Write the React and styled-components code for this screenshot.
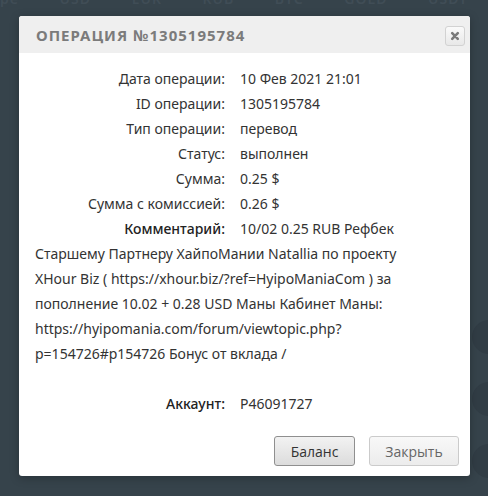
import React from "react";
import styled, { createGlobalStyle } from "styled-components";

const GlobalStyle = createGlobalStyle`
  html, body {
    margin: 0;
    padding: 0;
    height: 100%;
    overflow: hidden;
    background: #36434b;
  }
  body {
    font-family: "Noto Sans", "Open Sans", sans-serif;
  }
`;

const Page = styled.div`
  position: relative;
  width: 488px;
  height: 496px;
  overflow: hidden;
  background: #36434b;
`;

const PageHead = styled.div`
  display: flex;
  justify-content: space-between;
  padding: 0 20px 0 0;
  margin-top: -11px;
  font-size: 14px;
  font-weight: 600;
  color: #404d56;
  letter-spacing: 1px;
`;

const Side = styled.div`
  position: absolute;
  right: -18px;
  top: 320px;
  display: flex;
  flex-direction: column;
  gap: 28px;
`;

const Blob = styled.div`
  width: 34px;
  height: 34px;
  border-radius: 50%;
  background: #313d45;
`;

const Dialog = styled.div`
  position: absolute;
  top: 16px;
  left: 19px;
  width: 451px;
  background: #fff;
  border-radius: 3px;
  overflow: hidden;
  box-shadow: 0 2px 10px rgba(0, 0, 0, 0.25);
`;

const Header = styled.div`
  height: 37px;
  background: #efefef;
  display: flex;
  align-items: center;
  justify-content: space-between;
  padding: 0 5px 0 17px;
`;

const Title = styled.h2`
  margin: 0;
  font-size: 15px;
  font-weight: 700;
  letter-spacing: 1px;
  color: #7b7b7b;
`;

const CloseBtn = styled.button`
  width: 20px;
  height: 20px;
  padding: 0;
  margin-top: 2px;
  border: 1px solid #d2d2d2;
  border-radius: 3px;
  background: linear-gradient(#fafafa, #e8e8e8);
  display: flex;
  align-items: center;
  justify-content: center;
`;

const Body = styled.div`
  padding: 13px 16px 10px 16px;
  font-size: 14px;
  line-height: 25px;
  color: #333;
`;

const Row = styled.div`
  white-space: nowrap;
`;

const Label = styled.span`
  display: inline-block;
  width: 190px;
  margin-right: 15px;
  text-align: right;
  font-weight: ${(p) => (p.$strong ? 500 : 400)};
  color: ${(p) => (p.$strong ? "#222" : "#333")};
`;

const Comment = styled.div`
  white-space: nowrap;
  margin-bottom: 25px;
`;

const Footer = styled.div`
  display: flex;
  justify-content: flex-end;
  gap: 14px;
  margin-top: 20px;
  margin-right: -5px;
`;

const Button = styled.button`
  height: 30px;
  width: ${(p) => p.$w}px;
  border-radius: 3px;
  font-family: "Open Sans", sans-serif;
  font-size: 14px;
  cursor: pointer;
  border: 1px solid ${(p) => (p.$primary ? "#8f8f8f" : "#cbcbcb")};
  color: ${(p) => (p.$primary ? "#333" : "#666")};
  background: ${(p) =>
    p.$primary
      ? "linear-gradient(#f2f2f2, #dcdcdc)"
      : "linear-gradient(#f8f8f8, #ececec)"};
`;

const rows = [
  ["Дата операции:", "10 Фев 2021 21:01"],
  ["ID операции:", "1305195784"],
  ["Тип операции:", "перевод"],
  ["Статус:", "выполнен"],
  ["Сумма:", "0.25 $"],
  ["Сумма с комиссией:", "0.26 $"],
];

export default function App() {
  return (
    <Page>
      <GlobalStyle />
      <PageHead>
        <span>pe</span>
        <span>USD</span>
        <span>EUR</span>
        <span>RUB</span>
        <span>BTC</span>
        <span>GOLD</span>
        <span>USDT</span>
      </PageHead>
      <Side>
        <Blob />
        <Blob />
        <Blob />
      </Side>
      <Dialog>
        <Header>
          <Title>ОПЕРАЦИЯ №1305195784</Title>
          <CloseBtn>
            <svg width="10" height="10" viewBox="0 0 10 10">
              <path d="M2.2 2.2 L7.8 7.8 M7.8 2.2 L2.2 7.8" stroke="#7a7a7a" strokeWidth="2.6" strokeLinecap="round" />
            </svg>
          </CloseBtn>
        </Header>
        <Body>
          {rows.map(([l, v]) => (
            <Row key={l}>
              <Label>{l}</Label>
              {v}
            </Row>
          ))}
          <Comment>
            <Label $strong>Комментарий:</Label>
            10/02 0.25 RUB Рефбек
            <br />
            Старшему Партнеру ХайпоМании Natallia по проекту
            <br />
            XHour Biz ( https://xhour.biz/?ref=HyipoManiaCom ) за
            <br />
            пополнение 10.02 + 0.28 USD Маны Кабинет Маны:
            <br />
            https://hyipomania.com/forum/viewtopic.php?
            <br />
            p=154726#p154726 Бонус от вклада /
          </Comment>
          <Row>
            <Label $strong>Аккаунт:</Label>
            P46091727
          </Row>
          <Footer>
            <Button $primary $w={81}>Баланс</Button>
            <Button $w={90}>Закрыть</Button>
          </Footer>
        </Body>
      </Dialog>
    </Page>
  );
}
